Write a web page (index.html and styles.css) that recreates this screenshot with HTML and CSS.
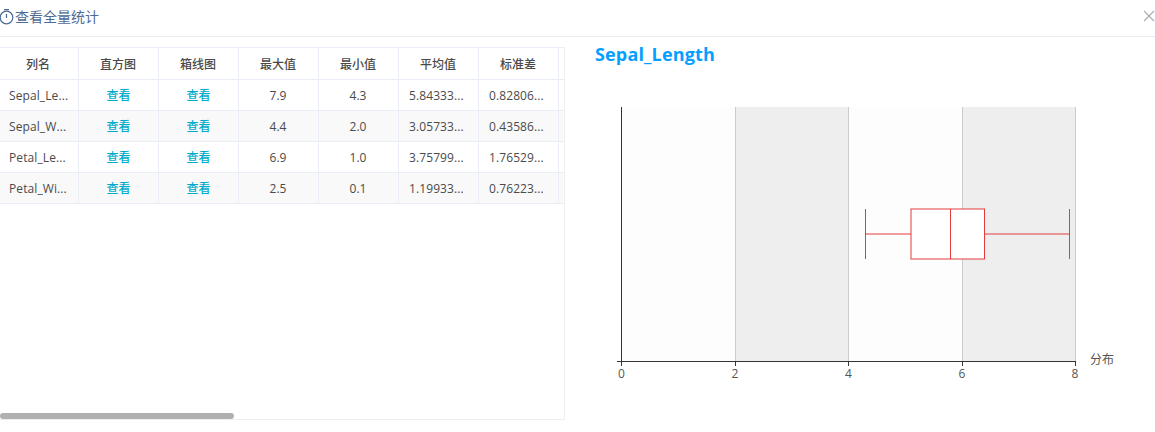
FILE: index.html
```html
<!DOCTYPE html>
<html lang="zh">
<head>
<meta charset="utf-8">
<title>查看全量统计</title>
<link rel="stylesheet" href="styles.css">
</head>
<body>
<div class="dialog">
  <header class="head">
    <div class="head-title">
      <svg class="clock" width="15" height="17" viewBox="0 0 15 17"><circle cx="6.5" cy="9.5" r="6.3" fill="none" stroke="#4a6a94" stroke-width="1.2"/><path d="M4 1.6h5M6.5 6v4" fill="none" stroke="#4a6a94" stroke-width="1.2"/></svg>
      <span>查看全量统计</span>
    </div>
    <svg class="close" width="12" height="12" viewBox="0 0 12 12"><path d="M1 1l10 10M11 1L1 11" stroke="#a8acb3" stroke-width="1.1" fill="none"/></svg>
  </header>
  <main class="body">
    <section class="panel">
      <div class="grid">
        <div class="row row-head"><div class="cell">列名</div><div class="cell">直方图</div><div class="cell">箱线图</div><div class="cell">最大值</div><div class="cell">最小值</div><div class="cell">平均值</div><div class="cell">标准差</div><div class="cell"></div></div>
        <div class="row"><div class="cell trunc">Sepal_Le...</div><div class="cell link">查看</div><div class="cell link">查看</div><div class="cell">7.9</div><div class="cell">4.3</div><div class="cell trunc">5.84333...</div><div class="cell trunc">0.82806...</div><div class="cell"></div></div>
        <div class="row alt"><div class="cell trunc">Sepal_W...</div><div class="cell link">查看</div><div class="cell link">查看</div><div class="cell">4.4</div><div class="cell">2.0</div><div class="cell trunc">3.05733...</div><div class="cell trunc">0.43586...</div><div class="cell"></div></div>
        <div class="row"><div class="cell trunc">Petal_Le...</div><div class="cell link">查看</div><div class="cell link">查看</div><div class="cell">6.9</div><div class="cell">1.0</div><div class="cell trunc">3.75799...</div><div class="cell trunc">1.76529...</div><div class="cell"></div></div>
        <div class="row alt"><div class="cell trunc">Petal_Wi...</div><div class="cell link">查看</div><div class="cell link">查看</div><div class="cell">2.5</div><div class="cell">0.1</div><div class="cell trunc">1.19933...</div><div class="cell trunc">0.76223...</div><div class="cell"></div></div>
      </div>
      <div class="scrollbar"></div>
    </section>
    <section class="detail">
      <h2 class="detail-title">Sepal_Length</h2>
      <svg class="chart" width="560" height="330" viewBox="595 70 560 330">
        <rect x="621.5" y="107" width="113.5" height="254" fill="#fdfdfd"/>
        <rect x="735" y="107" width="113.5" height="254" fill="#eeeeee"/>
        <rect x="848.5" y="107" width="113.5" height="254" fill="#fdfdfd"/>
        <rect x="962" y="107" width="113.5" height="254" fill="#eeeeee"/>
        <path d="M735.5 107V361M848.5 107V361M962.5 107V361M1075.5 107V361" stroke="#cccccc" fill="none"/>
        <path d="M621.5 107V361.5M617 361.5H1075.5M621.5 361V366M735.5 361V366M848.5 361V366M962.5 361V366M1075.5 361V366" stroke="#333333" fill="none"/>
        <rect x="911" y="209" width="73.5" height="50" fill="#ffffff" stroke="#e43c3c"/>
        <path d="M865.5 234H911M984.5 234H1069.5M865.5 209V259M1069.5 209V259M950.5 209V259" stroke="#e43c3c" fill="none"/>
        <g class="tick">
          <text x="621.5" y="378">0</text><text x="735" y="378">2</text><text x="848.5" y="378">4</text><text x="962" y="378">6</text><text x="1075" y="378">8</text>
        </g>
        <text class="axis-name" x="1090" y="364">分布</text>
      </svg>
    </section>
  </main>
</div>
</body>
</html>
```

FILE: styles.css
```css
* { box-sizing: border-box; }
html, body { margin: 0; padding: 0; background: #fff; }
body {
  width: 1155px;
  height: 432px;
  overflow: hidden;
  font-family: "Open Sans", "Noto Sans CJK SC", sans-serif;
  font-size: 12px;
  color: #4a4a4a;
}
.head {
  height: 37px;
  border-bottom: 1px solid #e8ecf0;
  display: flex;
  align-items: center;
  justify-content: space-between;
  padding: 0 0 3px 0;
}
.head-title {
  display: flex;
  align-items: center;
  font-size: 14px;
  color: #4e6b93;
  line-height: 18px;
}
.clock { display: block; }
.close { position: relative; top: -1px; }
.body { display: flex; padding-top: 10px; }
.panel {
  position: relative;
  width: 565px;
  height: 373px;
  border-right: 1px solid #eeeeee;
  border-bottom: 1px solid #eeeeee;
  overflow: hidden;
}
.grid { margin-left: -1px; width: 640px; }
.row {
  display: grid;
  grid-template-columns: repeat(8, 80px);
  height: 31px;
}
.row-head { height: 33px; font-weight: 500; color: #4a4a4a; border-top: 1px solid #eaeff7; }
.alt { background: #f9f9fa; }
.cell {
  display: flex;
  align-items: center;
  justify-content: center;
  padding-right: 1px;
  border-right: 1px solid #e9eef6;
  border-bottom: 1px solid #e9eef6;
  white-space: nowrap;
  overflow: hidden;
}
.trunc { justify-content: flex-start; padding-left: 10px; letter-spacing: 0.1px; }
.link { color: #00aacc; font-weight: 500; padding-right: 0; }
.scrollbar {
  position: absolute;
  left: 0;
  bottom: 0;
  width: 234px;
  height: 6px;
  border-radius: 3px;
  background: #b0b0b0;
}
.detail { flex: 1; padding: 0 0 0 30px; min-width: 0; }
.detail-title {
  margin: -3px 0 0;
  font-size: 18px;
  line-height: 20px;
  font-weight: 700;
  letter-spacing: 0.15px;
  color: #049fff;
}
.chart { display: block; margin: 6px 0 0 0; overflow: visible; }
.tick text { font-family: "Open Sans", sans-serif; font-size: 12px; fill: #555; text-anchor: middle; }
.axis-name { font-family: "Noto Sans CJK SC", sans-serif; font-size: 12px; fill: #555; }
```
